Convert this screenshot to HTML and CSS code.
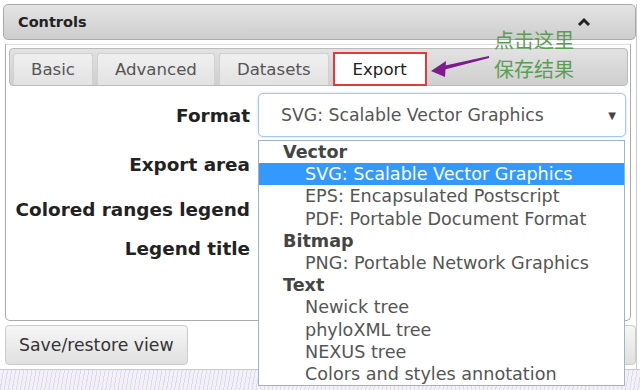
FILE: index.html
```html
<!DOCTYPE html>
<html lang="en">
<head>
  <meta charset="UTF-8">
  <meta name="viewport" content="width=device-width, initial-scale=1.0">
  <title>Controls - Export</title>
  <link rel="stylesheet" href="styles.css">
</head>
<body>
  <div class="controls">
    <div class="controls-header">
      <span class="title">Controls</span>
      <svg class="caret" width="14" height="10" viewBox="0 0 14 10">
        <path d="M2 8 L7 3 L12 8" fill="none" stroke="#222" stroke-width="3"/>
      </svg>
    </div>

    <div class="controls-body">
      <div class="tabs">
        <div class="tab">Basic</div>
        <div class="tab">Advanced</div>
        <div class="tab">Datasets</div>
        <div class="tab active">Export</div>
      </div>

      <div class="row row-format">
        <label>Format</label>
        <div class="field">
          <div class="select">SVG: Scalable Vector Graphics<span class="arrow">&#9660;</span></div>
          <ul class="options">
            <li class="group">Vector</li>
            <li class="selected">SVG: Scalable Vector Graphics</li>
            <li>EPS: Encapsulated Postscript</li>
            <li>PDF: Portable Document Format</li>
            <li class="group">Bitmap</li>
            <li>PNG: Portable Network Graphics</li>
            <li class="group">Text</li>
            <li>Newick tree</li>
            <li>phyloXML tree</li>
            <li>NEXUS tree</li>
            <li>Colors and styles annotation</li>
          </ul>
        </div>
      </div>
      <div class="row row-area">
        <label>Export area</label>
        <div class="field"></div>
      </div>
      <div class="row row-legend">
        <label>Colored ranges legend</label>
        <div class="field"></div>
      </div>
      <div class="row row-title">
        <label>Legend title</label>
        <div class="field"><div class="input"></div></div>
      </div>
    </div>

    <div class="actions">
      <button class="btn">Save/restore view</button>
      <button class="btn">Export</button>
    </div>
  </div>

  <div class="backdrop"></div>

  <!-- annotation over the screenshot -->
  <div class="note">
    <p>点击这里</p>
    <p>保存结果</p>
  </div>
  <svg class="pointer" width="64" height="26" viewBox="0 0 64 26">
    <path d="M60 4 L14 14 L14 18 L60 6 Z" fill="#7d1a8c"/>
    <path d="M2 19 L17 9 L16 25 Z" fill="#7d1a8c"/>
  </svg>
</body>
</html>
```

FILE: styles.css
```css
/* Global Styles */
* {
  margin: 0;
  padding: 0;
  box-sizing: border-box;
}

body {
  font-family: 'DejaVu Sans', Verdana, sans-serif;
  background: #fff;
  width: 640px;
  height: 390px;
  overflow: hidden;
  position: relative;
}

.controls {
  margin: 4px 3px 0 3px;
  border-right: 1px solid #ccc;
}

.controls-header {
  height: 36px;
  display: flex;
  align-items: center;
  justify-content: space-between;
  padding: 0 44px 0 14px;
  background: linear-gradient(#e4e4e4, #cdcdcd);
  border: 1px solid #aaa;
  border-radius: 5px;
}

.title {
  font-size: 14.5px;
  font-weight: bold;
  color: #222;
}

.controls-body {
  margin: 4px 5px 0 2px;
  padding: 3px 2px 51px 3px;
  border: 1px solid #aaa;
  border-top-color: #ddd;
  border-radius: 0 0 5px 5px;
  background: #fff;
}

.tabs {
  height: 38px;
  display: flex;
  align-items: flex-end;
  gap: 4px;
  padding: 0 3px;
  background: linear-gradient(#e2e2e2, #cfcfcf);
  border: 1px solid #bbb;
  border-radius: 4px;
}

.tab {
  height: 32px;
  display: flex;
  align-items: center;
  padding: 0 17px;
  font-size: 16.6px;
  color: #555;
  background: linear-gradient(#f0f0f0, #e2e2e2);
  border: 1px solid #d0d0d0;
  border-bottom: none;
  border-radius: 3px 3px 0 0;
}

.tab.active {
  height: 34px;
  padding: 0 18px;
  color: #222;
  background: #fff;
  border: 2px solid #e0393e;
  border-radius: 0;
  margin-bottom: -1px;
}

.row {
  display: grid;
  grid-template-columns: 241px 1fr;
  column-gap: 8px;
  align-items: center;
  padding-right: 2px;
}

.row-format { height: 44px; margin-top: 7px; }
.row-area { height: 54px; }
.row-legend { height: 36px; }
.row-title { height: 42px; }

label {
  text-align: right;
  font-size: 18.4px;
  font-weight: bold;
  color: #222;
  white-space: nowrap;
}

.field {
  position: relative;
  height: 100%;
}

.select {
  height: 44px;
  display: flex;
  align-items: center;
  justify-content: space-between;
  padding: 0 9px 0 22px;
  font-size: 17.3px;
  color: #555;
  border: 1px solid #a9c6e6;
  border-radius: 5px;
  box-shadow: 0 0 3px rgba(120, 170, 230, 0.4);
  background: #fff;
}

.arrow {
  font-size: 10px;
  color: #444;
}

.input {
  margin-top: 11px;
  height: 20px;
  border-left: 1px solid #aaa;
}

.options {
  position: absolute;
  top: calc(100% + 3px);
  left: 0;
  right: 1px;
  z-index: 2;
  list-style: none;
  background: #fff;
  border: 1px solid #9fb2c8;
}

.options li {
  height: 22.2px;
  line-height: 22px;
  padding-left: 46px;
  font-size: 17.6px;
  color: #555;
  white-space: nowrap;
}

.options li.group {
  padding-left: 24px;
  font-weight: bold;
  color: #444;
}

.options li.selected {
  background: #3399ff;
  color: #fff;
}

.actions {
  display: flex;
  justify-content: space-between;
  margin: 4px 0 0 2px;
  padding-bottom: 4px;
}

.btn {
  height: 40px;
  padding: 0 13px;
  font-family: inherit;
  font-size: 17.3px;
  color: #333;
  background: linear-gradient(#f6f6f6, #e0e0e0);
  border: 1px solid #ccc;
  border-radius: 4px;
}

.backdrop {
  height: 30px;
  background: repeating-linear-gradient(100deg, #f3f1f8 0 3px, #dedaea 3px 4px);
  border-top: 1px solid #c9c6d6;
}

.note {
  position: absolute;
  left: 494px;
  top: 25px;
  display: flex;
  flex-direction: column;
  gap: 0;
  font-family: 'Noto Sans CJK SC', sans-serif;
  font-size: 20px;
  line-height: 29px;
  color: #5a9e55;
}

.pointer {
  position: absolute;
  left: 429px;
  top: 52px;
}
```
